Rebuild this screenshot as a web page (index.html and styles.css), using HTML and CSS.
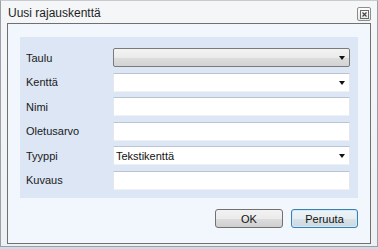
FILE: index.html
```html
<!DOCTYPE html>
<html>
<head>
<meta charset="utf-8">
<link rel="stylesheet" href="styles.css">
</head>
<body>
<div class="window">
  <div class="titlebar">
    <span class="title">Uusi rajauskenttä</span>
    <span class="close">
      <svg width="9" height="9" viewBox="0 0 9 9"><rect x="0.5" y="0.5" width="8" height="8" fill="none" stroke="#6a6a6a"/><path d="M2.5 2.5 L6.5 6.5 M6.5 2.5 L2.5 6.5" stroke="#444" stroke-width="1.2"/></svg>
    </span>
  </div>
  <div class="client">
    <div class="panel">
      <div class="row"><span class="label">Taulu</span><div class="field combo gray"><span class="arrow"></span></div></div>
      <div class="row"><span class="label">Kenttä</span><div class="field combo"><span class="arrow"></span></div></div>
      <div class="row"><span class="label">Nimi</span><div class="field"></div></div>
      <div class="row"><span class="label">Oletusarvo</span><div class="field"></div></div>
      <div class="row"><span class="label">Tyyppi</span><div class="field combo"><span class="value">Tekstikenttä</span><span class="arrow"></span></div></div>
      <div class="row"><span class="label">Kuvaus</span><div class="field"></div></div>
    </div>
    <div class="buttons">
      <button class="btn">OK</button>
      <button class="btn focus">Peruuta</button>
    </div>
  </div>
</div>
</body>
</html>
```
FILE: styles.css
```css
html, body {
  margin: 0;
  padding: 0;
}
body {
  width: 378px;
  height: 249px;
  background: #cfdbe6;
  font-family: "Liberation Sans", Arial, sans-serif;
  overflow: hidden;
}
.window {
  box-sizing: border-box;
  width: 378px;
  height: 247px;
  background: linear-gradient(#f4f6f8, #eef1f4);
  border: 1px solid #9aa0a6;
  border-top-color: #c8ccd0;
  padding: 0 6px 0 6px;
}
.titlebar {
  height: 22px;
  display: flex;
  align-items: center;
  justify-content: space-between;
  padding-left: 1px;
  padding-right: 0;
}
.title {
  font-size: 12px;
  color: #1e1e1e;
  padding-top: 2px;
}
.close {
  box-sizing: border-box;
  width: 14px;
  height: 14px;
  margin-top: 4px;
  margin-right: 0;
  border: 1px solid #8c8c8c;
  border-radius: 2px;
  background: linear-gradient(#fdfdfd, #e8e8e8);
  display: flex;
  align-items: center;
  justify-content: center;
}
.client {
  box-sizing: border-box;
  width: 364px;
  height: 221px;
  border: 1px solid #707070;
  background: #f2f7fd;
  padding: 13px 12px 0 12px;
}
.panel {
  box-sizing: border-box;
  height: 161px;
  background: #dce6f4;
  padding: 11px 8px 0 6px;
  display: flex;
  flex-direction: column;
  gap: 5.6px;
}
.row {
  display: flex;
  align-items: center;
  height: 19px;
}
.label {
  width: 87px;
  font-size: 11px;
  color: #1a1a1a;
}
.field {
  box-sizing: border-box;
  flex: 1;
  height: 19px;
  background: #ffffff;
  border-top: 1px solid #b9c4d2;
  border-left: 1px solid #e2e8ef;
  border-right: 1px solid #e2e8ef;
  border-bottom: 1px solid #eef2f7;
  display: flex;
  align-items: center;
  position: relative;
}
.field.gray {
  border: 1px solid #7a7a7a;
  border-radius: 2px;
  background: linear-gradient(#f3f3f3 0%, #ebebeb 50%, #dddddd 51%, #d3d3d3 100%);
}
.value {
  font-size: 11px;
  color: #111;
  padding-left: 2px;
}
.arrow {
  position: absolute;
  right: 4px;
  top: 7px;
  width: 0;
  height: 0;
  border-left: 3.5px solid transparent;
  border-right: 3.5px solid transparent;
  border-top: 4px solid #111;
}
.buttons {
  display: flex;
  justify-content: flex-end;
  gap: 8px;
  margin-top: 11px;
}
.btn {
  box-sizing: border-box;
  width: 68px;
  height: 19px;
  padding: 0;
  font-family: "Liberation Sans", Arial, sans-serif;
  font-size: 11px;
  color: #111;
  border: 1px solid #707070;
  border-radius: 3px;
  background: linear-gradient(#f2f2f2 0%, #ebebeb 50%, #dddddd 51%, #cfcfcf 100%);
}
.btn.focus {
  width: 67px;
  border-color: #3c7fb1;
  box-shadow: inset 0 0 0 1px #cfeaf8;
  background: linear-gradient(#eef4f7 0%, #e6eef2 50%, #d8e2e8 51%, #ccd8df 100%);
}
```
